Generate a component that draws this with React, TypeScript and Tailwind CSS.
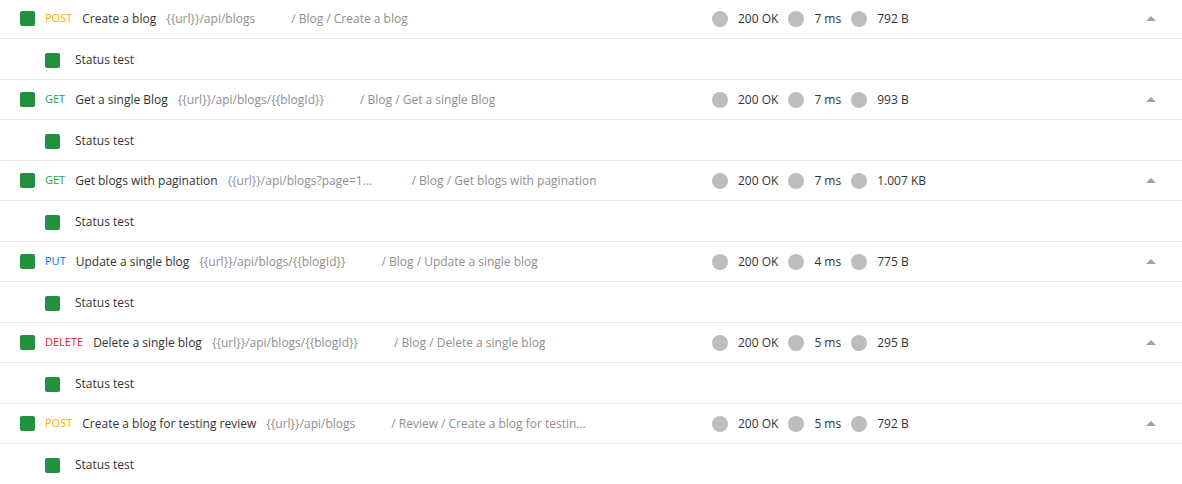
import React from "react";

type Request = {
  method: "GET" | "POST" | "PUT" | "DELETE";
  name: string;
  url: string;
  path: string;
  status: string;
  time: string;
  size: string;
};

const requests: Request[] = [
  { method: "POST", name: "Create a blog", url: "{{url}}/api/blogs", path: "/ Blog / Create a blog", status: "200 OK", time: "7 ms", size: "792 B" },
  { method: "GET", name: "Get a single Blog", url: "{{url}}/api/blogs/{{blogId}}", path: "/ Blog / Get a single Blog", status: "200 OK", time: "7 ms", size: "993 B" },
  { method: "GET", name: "Get blogs with pagination", url: "{{url}}/api/blogs?page=1&limit=2", path: "/ Blog / Get blogs with pagination", status: "200 OK", time: "7 ms", size: "1.007 KB" },
  { method: "PUT", name: "Update a single blog", url: "{{url}}/api/blogs/{{blogId}}", path: "/ Blog / Update a single blog", status: "200 OK", time: "4 ms", size: "775 B" },
  { method: "DELETE", name: "Delete a single blog", url: "{{url}}/api/blogs/{{blogId}}", path: "/ Blog / Delete a single blog", status: "200 OK", time: "5 ms", size: "295 B" },
  { method: "POST", name: "Create a blog for testing review", url: "{{url}}/api/blogs", path: "/ Review / Create a blog for testing review", status: "200 OK", time: "5 ms", size: "792 B" },
];

const methodColor: Record<Request["method"], string> = {
  GET: "text-[#27a048]",
  POST: "text-[#ffad00]",
  PUT: "text-[#0b6fe3]",
  DELETE: "text-[#f0191f]",
};

function Stat({ label }: { label: string }) {
  return (
    <div className="flex items-center gap-[10px]">
      <span className="size-[16px] rounded-full bg-[#bdbdbd]" />
      <span className="text-[12px] text-[#333333]">{label}</span>
    </div>
  );
}

export default function App() {
  return (
    <div
      className="w-[1182px] h-[484px] overflow-hidden bg-white"
      style={{ fontFamily: '"Open Sans", "Liberation Sans", sans-serif' }}
    >
      <div className="-mt-[1px] flex flex-col">
        {requests.map((req, i) => (
          <div key={i} className="flex flex-col">
            {/* request header */}
            <div className="h-[40px] flex items-center pl-[20px] border-b border-[#e8e8e8]">
              <div className="w-[692px] flex items-center gap-[10px] whitespace-nowrap">
                <span className="size-[15px] rounded-[2px] bg-[#23903e] shrink-0" />
                <span className={`text-[11px] ${methodColor[req.method]}`}>
                  {req.method}
                </span>
                <span className="text-[12px] text-[#333333]">{req.name}</span>
                <span className="text-[12px] text-[#8f8f8f] max-w-[148px] truncate">
                  {req.url}
                </span>
                <span className="ml-[26px] text-[12px] text-[#8f8f8f] max-w-[196px] truncate">
                  {req.path}
                </span>
              </div>
              <div className="flex items-center gap-[10px]">
                <Stat label={req.status} />
                <Stat label={req.time} />
                <Stat label={req.size} />
              </div>
              <div className="ml-auto mr-[26px] w-0 h-0 border-l-[5px] border-r-[5px] border-b-[5px] border-l-transparent border-r-transparent border-b-[#a0a0a0]" />
            </div>
            {/* test result */}
            <div className="h-[41px] flex items-center pl-[45px] pt-[2px] gap-[15px] border-b border-[#e8e8e8]">
              <span className="size-[15px] rounded-[2px] bg-[#23903e]" />
              <span className="text-[12px] text-[#333333]">Status test</span>
            </div>
          </div>
        ))}
      </div>
    </div>
  );
}
